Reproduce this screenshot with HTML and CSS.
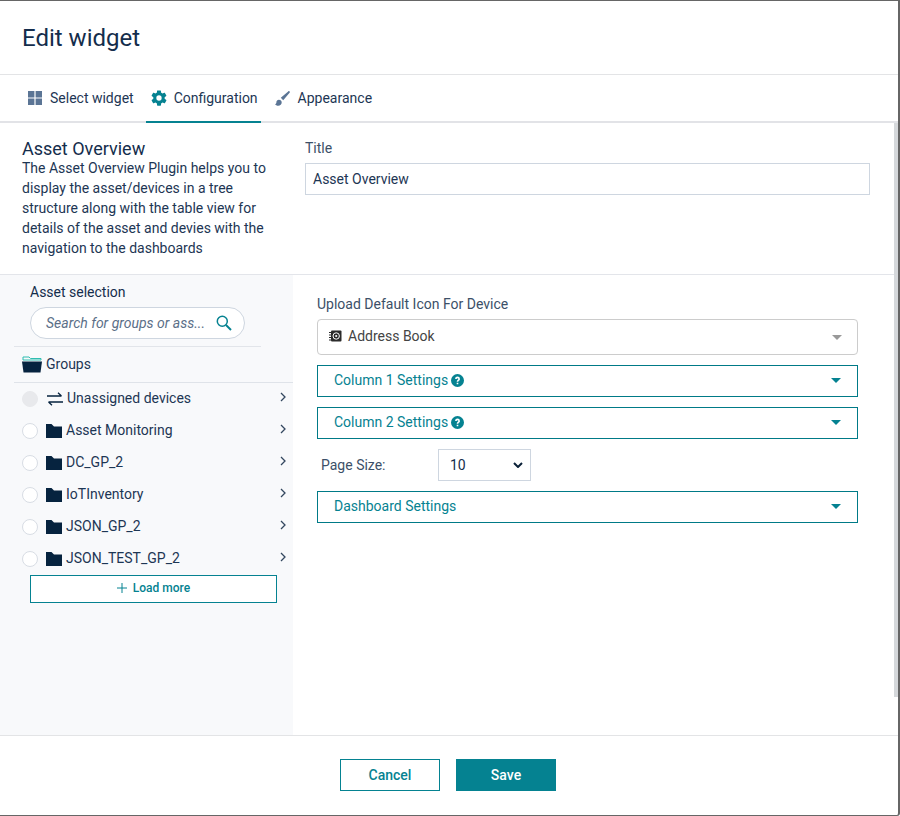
FILE: index.html
```html
<!DOCTYPE html>
<html lang="en">
<head>
<meta charset="utf-8">
<title>Edit widget</title>
<link rel="stylesheet" href="styles.css">
</head>
<body>
<div class="dialog">
  <header class="head"><h1>Edit widget</h1></header>
  <nav class="tabs">
    <a class="tab">
      <svg class="tab-ico" viewBox="0 0 14 14" width="14" height="14"><path fill="#5b7595" d="M0 0h6.4v6.4H0zM7.6 0H14v6.4H7.6zM0 7.6h6.4V14H0zM7.6 7.600H14V14H7.600z"/></svg>
      <span>Select widget</span>
    </a>
    <a class="tab active">
      <svg class="tab-ico" viewBox="1.500 1.500 21 21" width="16" height="16"><path fill="#058291" d="M19.4 13c.04-.33.06-.66.06-1s-.02-.67-.06-1l2.1-1.650c.2-.15.25-.42.12-.64l-2-3.460c-.12-.22-.38-.3-.6-.22l-2.500 1c-.52-.4-1.080-.73-1.700-.98l-.37-2.650A.49.49 0 0 0 14 2h-4c-.25 0-.46.18-.5.42l-.37 2.650c-.62.25-1.180.59-1.700.98l-2.500-1a.5.5 0 0 0-.6.22l-2 3.460c-.13.22-.07.49.12.64L4.570 11c-.04.33-.07.66-.07 1s.03.67.07 1l-2.110 1.650c-.2.15-.25.42-.12.64l2 3.460c.12.22.38.3.6.22l2.500-1c.52.4 1.080.73 1.700.98l.37 2.650c.04.24.25.42.5.42h4c.25 0 .46-.18.5-.42l.37-2.650c.62-.25 1.180-.59 1.700-.98l2.500 1c.22.08.48 0 .6-.22l2-3.460c.13-.22.07-.49-.12-.64zM12 15.500a3.500 3.500 0 1 1 0-7 3.500 3.500 0 0 1 0 7z"/></svg>
      <span>Configuration</span>
    </a>
    <a class="tab">
      <svg class="tab-ico" viewBox="0 0 15 15" width="15" height="15"><path fill="#5b7595" d="M14.6.4c-.4-.4-1-.4-1.400 0L5.800 6.800l2.400 2.400 6.400-7.400c.4-.4.4-1 0-1.400zM3.900 8.800c-1.500 0-2.500 1.100-2.500 2.500 0 1.100-.5 1.700-1.400 1.900.6.9 1.900 1.500 3.200 1.500 2 0 3.500-1.400 3.500-3.300 0-1.500-1.100-2.600-2.800-2.600z"/></svg>
      <span>Appearance</span>
    </a>
  </nav>

  <main class="content">
    <section class="intro">
      <div class="intro-text">
        <h2>Asset Overview</h2>
        <p>The Asset Overview Plugin helps you to display the asset/devices in a tree structure along with the table view for details of the asset and devies with the navigation to the dashboards</p>
      </div>
      <div class="title-field">
        <label>Title</label>
        <div class="title-input">Asset Overview</div>
      </div>
    </section>

    <section class="split">
      <aside class="tree">
        <div class="tree-label">Asset selection</div>
        <div class="search">
          <span class="search-text">Search for groups or ass...</span>
          <svg viewBox="0 0 16 16" width="16" height="16"><circle cx="6.300" cy="6.300" r="5" fill="none" stroke="#058291" stroke-width="1.500"/><path d="M10 10l5 5" stroke="#058291" stroke-width="2"/></svg>
        </div>
        <div class="groups">
          <svg class="groups-ico" viewBox="0 0 20 17" width="20" height="17"><path d="M1 3V1h6l1.500 1.500H19V4H1z" fill="none" stroke="#2fbdb0" stroke-width="1"/><path fill="#06233f" d="M0 5.500h20l-1.500 11H1.500z"/></svg>
          <span>Groups</span>
        </div>
        <ul class="rows">
          <li class="row">
            <i class="radio off"></i>
            <svg class="swap" viewBox="0 0 16 14" width="16" height="14"><path fill="none" stroke="#06233f" stroke-width="1.300" d="M0 4h14.500M11 .8 14.500 4M16 10H1.500M5 13.200 1.500 10"/></svg>
            <span class="row-name">Unassigned devices</span>
            <svg class="chev" viewBox="0 0 6 10" width="6" height="10"><path fill="none" stroke="#33475f" stroke-width="1.300" d="M1 1l4 4-4 4"/></svg>
          </li>
          <li class="row">
            <i class="radio"></i>
            <svg class="folder" viewBox="0 0 16 14" width="16" height="14"><path fill="#06233f" d="M0 0h5.500L8 2.500h8V14H0z"/></svg>
            <span class="row-name">Asset Monitoring</span>
            <svg class="chev" viewBox="0 0 6 10" width="6" height="10"><path fill="none" stroke="#33475f" stroke-width="1.300" d="M1 1l4 4-4 4"/></svg>
          </li>
          <li class="row">
            <i class="radio"></i>
            <svg class="folder" viewBox="0 0 16 14" width="16" height="14"><path fill="#06233f" d="M0 0h5.500L8 2.500h8V14H0z"/></svg>
            <span class="row-name">DC_GP_2</span>
            <svg class="chev" viewBox="0 0 6 10" width="6" height="10"><path fill="none" stroke="#33475f" stroke-width="1.300" d="M1 1l4 4-4 4"/></svg>
          </li>
          <li class="row">
            <i class="radio"></i>
            <svg class="folder" viewBox="0 0 16 14" width="16" height="14"><path fill="#06233f" d="M0 0h5.500L8 2.500h8V14H0z"/></svg>
            <span class="row-name">IoTInventory</span>
            <svg class="chev" viewBox="0 0 6 10" width="6" height="10"><path fill="none" stroke="#33475f" stroke-width="1.300" d="M1 1l4 4-4 4"/></svg>
          </li>
          <li class="row">
            <i class="radio"></i>
            <svg class="folder" viewBox="0 0 16 14" width="16" height="14"><path fill="#06233f" d="M0 0h5.500L8 2.500h8V14H0z"/></svg>
            <span class="row-name">JSON_GP_2</span>
            <svg class="chev" viewBox="0 0 6 10" width="6" height="10"><path fill="none" stroke="#33475f" stroke-width="1.300" d="M1 1l4 4-4 4"/></svg>
          </li>
          <li class="row">
            <i class="radio"></i>
            <svg class="folder" viewBox="0 0 16 14" width="16" height="14"><path fill="#06233f" d="M0 0h5.500L8 2.500h8V14H0z"/></svg>
            <span class="row-name">JSON_TEST_GP_2</span>
            <svg class="chev" viewBox="0 0 6 10" width="6" height="10"><path fill="none" stroke="#33475f" stroke-width="1.300" d="M1 1l4 4-4 4"/></svg>
          </li>
        </ul>
        <button class="load-more"><svg viewBox="0 0 10 10" width="10" height="10"><path d="M5 0v10M0 5h10" stroke="#058291" stroke-width="1"/></svg><span>Load more</span></button>
      </aside>

      <div class="config">
        <div class="config-label">Upload Default Icon For Device</div>
        <div class="icon-select">
          <svg viewBox="0 0 13 12" width="13" height="12"><rect x="2" y="0.500" width="10.500" height="11" rx="1" fill="#2b2b2b"/><circle cx="7.200" cy="6" r="3.200" fill="none" stroke="#fff" stroke-width="1"/><circle cx="7.200" cy="6" r="1.100" fill="#fff"/><path d="M0 2.500h2M0 5h2M0 7.500h2M0 10h2" stroke="#2b2b2b"/></svg>
          <span class="icon-name">Address Book</span>
          <i class="caret grey"></i>
        </div>
        <div class="accordion">
          <span>Column 1 Settings</span>
          <svg class="help" viewBox="0 0 24 24" width="13" height="13"><path fill="#058291" d="M12 0a12 12 0 1 0 0 24 12 12 0 0 0 0-24zm1.500 19h-3v-3h3zm2.700-8c-.8 1-2.700 1.600-2.700 3.500h-3c0-3.300 3-3.500 3-5.200 0-.8-.7-1.500-1.500-1.500S10.500 8.500 10.500 9.300h-3a4.500 4.500 0 0 1 9 0c0 .6-.1 1.200-.3 1.700z"/></svg>
          <i class="caret"></i>
        </div>
        <div class="accordion">
          <span>Column 2 Settings</span>
          <svg class="help" viewBox="0 0 24 24" width="13" height="13"><path fill="#058291" d="M12 0a12 12 0 1 0 0 24 12 12 0 0 0 0-24zm1.500 19h-3v-3h3zm2.700-8c-.8 1-2.700 1.600-2.700 3.500h-3c0-3.300 3-3.500 3-5.200 0-.8-.7-1.500-1.500-1.500S10.500 8.500 10.500 9.300h-3a4.500 4.500 0 0 1 9 0c0 .6-.1 1.200-.3 1.700z"/></svg>
          <i class="caret"></i>
        </div>
        <div class="page-size">
          <span class="page-label">Page Size:</span>
          <div class="page-select">
            <span>10</span>
            <svg viewBox="0 0 10 6" width="10" height="6"><path fill="none" stroke="#0b2138" stroke-width="2" d="M1 1l4 4 4-4"/></svg>
          </div>
        </div>
        <div class="accordion">
          <span>Dashboard Settings</span>
          <i class="caret"></i>
        </div>
      </div>
    </section>
    <div class="thumb"></div>
  </main>

  <footer class="foot">
    <button class="btn ghost">Cancel</button>
    <button class="btn solid">Save</button>
  </footer>
</div>
</body>
</html>
```

FILE: styles.css
```css
* { box-sizing: border-box; }
html, body { margin: 0; padding: 0; }
body {
  width: 900px;
  height: 816px;
  overflow: hidden;
  background: #fff;
  font-family: Roboto, "Liberation Sans", sans-serif;
  font-size: 14px;
  color: #1d3654;
}
.dialog {
  width: 900px;
  height: 816px;
  display: flex;
  flex-direction: column;
  border-top: 1px solid #666;
  border-right: 2px solid #666;
  border-bottom: 1px solid #666;
  border-bottom-right-radius: 3px;
  background: #fff;
}
.head {
  height: 74px;
  flex: none;
  display: flex;
  align-items: center;
  padding: 0 22px 0;
  border-bottom: 1px solid #e3e4e6;
}
.head h1 {
  margin: 0;
  font-size: 24px;
  font-weight: 400;
  color: #142d4c;
}
.tabs {
  height: 48px;
  flex: none;
  display: flex;
  gap: 9px;
  padding-left: 23px;
  border-bottom: 2px solid #e2e3e7;
}
.tab {
  height: 48px;
  display: flex;
  align-items: center;
  gap: 8px;
  padding: 0 3px 0 5px;
  border-bottom: 2px solid transparent;
  color: #1d3654;
}
.tab.active { border-bottom-color: #058291; gap: 7px; }
.tab-ico { flex: none; }
.content {
  position: relative;
  flex: 1;
  min-height: 0;
  display: flex;
  flex-direction: column;
}
.intro {
  height: 152px;
  flex: none;
  display: flex;
  padding: 16px 0 0 22px;
  border-bottom: 1px solid #e3e5ea;
}
.intro-text { width: 260px; flex: none; }
.intro-text h2 {
  margin: 0;
  font-size: 18px;
  font-weight: 400;
  line-height: 19px;
  color: #142d4c;
}
.intro-text p {
  margin: 0;
  line-height: 20px;
}
.title-field { margin-left: 23px; width: 565px; }
.title-field label { display: block; line-height: 19px; color: #3c5068; }
.title-input {
  height: 32px;
  margin-top: 5px;
  padding: 1px 7px 0;
  border: 1px solid #ced6e0;
  line-height: 29px;
}
.split { flex: 1; min-height: 0; display: flex; }
.tree {
  width: 293px;
  flex: none;
  background: #f8f9fb;
  padding-top: 7px;
}
.tree-label {
  margin-left: 30px;
  line-height: 20px;
  color: #142d4c;
}
.search {
  width: 215px;
  height: 32px;
  margin: 5px 0 0 30px;
  padding: 0 12px 0 15px;
  display: flex;
  align-items: center;
  justify-content: space-between;
  border: 1px solid #ced6e0;
  border-radius: 16px;
  background: #fff;
}
.search-text { font-style: italic; color: #5b6f88; }
.groups {
  width: 247px;
  height: 36px;
  margin: 7px 0 0 14px;
  padding: 0 0 2px 8px;
  display: flex;
  align-items: center;
  gap: 4px;
  border-top: 1px solid #e2e5ea;
}
.groups-ico { margin-top: 2px; }
.rows {
  list-style: none;
  margin: 0 0 0 14px;
  padding: 0;
  border-top: 1px solid #dfe3e9;
}
.row {
  height: 32px;
  padding: 0 7px 0 8px;
  display: flex;
  align-items: center;
}
.row:first-child { height: 31px; padding-bottom: 1px; }
.radio {
  width: 16px;
  height: 16px;
  flex: none;
  border: 1px solid #d8dde4;
  border-radius: 50%;
  background: #fff;
  margin: 2px 8px 0 0;
}
.radio.off { background: #e8e9ec; border-color: #e8e9ec; margin-right: 9px; }
.swap { margin: 2px 4px 0 0; flex: none; }
.folder { margin: 2px 4px 0 0; flex: none; }
.row-name { flex: 1; }
.chev { flex: none; margin-top: -2px; }
.load-more {
  width: 247px;
  height: 28px;
  margin: 1px 0 0 30px;
  padding: 0 0 2px;
  display: flex;
  align-items: center;
  justify-content: center;
  gap: 6px;
  border: 1px solid #058291;
  background: #fff;
  color: #058291;
  font: 500 12px Roboto, "Liberation Sans", sans-serif;
}
.config { flex: 1; padding: 19px 0 0 24px; }
.config-label { line-height: 20px; color: #3c5068; }
.icon-select {
  width: 541px;
  height: 36px;
  margin-top: 5px;
  padding: 0 15px 2px 11px;
  display: flex;
  align-items: center;
  border: 1px solid #ccc;
  border-radius: 4px;
  color: #444;
}
.icon-name { flex: 1; margin-left: 6px; }
.accordion {
  width: 541px;
  height: 32px;
  margin-top: 10px;
  padding: 0 16px 2px 16px;
  display: flex;
  align-items: center;
  gap: 3px;
  border: 1px solid #007a87;
  color: #058291;
}
.accordion span { line-height: 28px; }
.accordion .caret { margin-left: auto; }
.caret {
  width: 0;
  height: 0;
  border-left: 5px solid transparent;
  border-right: 5px solid transparent;
  border-top: 5px solid #058291;
}
.caret.grey { border-top-color: #999; margin-top: 2px; }
.page-size {
  height: 32px;
  margin-top: 10px;
  display: flex;
  align-items: center;
}
.page-label { width: 121px; padding-left: 4px; color: #3c5068; }
.page-select {
  width: 93px;
  height: 32px;
  padding: 0 7px 0 11px;
  display: flex;
  align-items: center;
  justify-content: space-between;
  border: 1px solid #ced6e0;
  color: #142d4c;
}
.thumb {
  position: absolute;
  top: 0;
  right: 0;
  width: 4px;
  height: 574px;
  background: #d5d8db;
}
.foot {
  height: 80px;
  flex: none;
  display: flex;
  justify-content: center;
  gap: 16px;
  padding-top: 23px;
  padding-right: 2px;
  border-top: 1px solid #e3e4e6;
}
.btn {
  width: 100px;
  height: 32px;
  padding: 0;
  font: 500 14px Roboto, "Liberation Sans", sans-serif;
}
.btn.ghost { border: 1px solid #058291; background: #fff; color: #058291; }
.btn.solid { border: 1px solid #058291; background: #058291; color: #fff; }
```
